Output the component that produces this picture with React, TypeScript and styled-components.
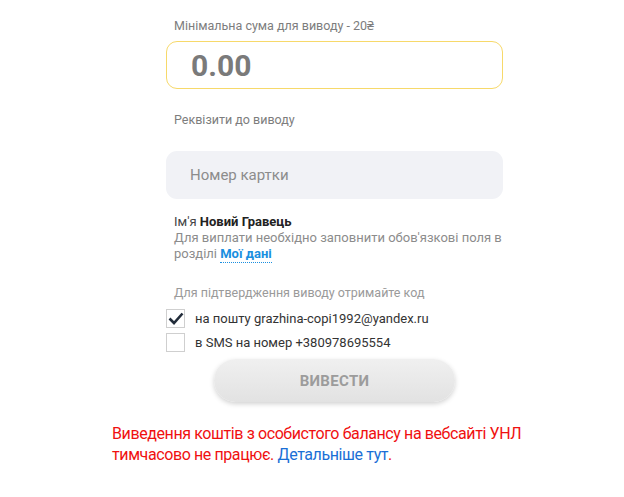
import React, { useState } from 'react';
import styled, { createGlobalStyle } from 'styled-components';

const GlobalStyle = createGlobalStyle`
  body {
    margin: 0;
    background: #fff;
    font-family: Roboto, "Noto Sans", Arial, sans-serif;
  }
`

const Page = styled.div`
  width: 624px;
  display: flex;
  flex-direction: column;
  align-items: center;
  padding-top: 17px;
`

const Form = styled.div`
  width: 337px;
  margin-left: 45px;
  display: flex;
  flex-direction: column;
`

const Label = styled.div<{ $light?: boolean }>`
  font-size: 12.5px;
  color: ${(p) => (p.$light ? '#9a9a9a' : '#7d7d7d')};
  padding-left: 8px;
  line-height: 18px;
`

const AmountInput = styled.input`
  box-sizing: border-box;
  margin-top: 6px;
  height: 48px;
  border: 1.5px solid #f7d96a;
  border-radius: 11px;
  padding: 0 24px;
  font-family: inherit;
  font-size: 30px;
  font-weight: 700;
  color: #7a7a7a;
  outline: none;

  &::placeholder {
    color: #7a7a7a;
  }
`

const CardInput = styled.input`
  box-sizing: border-box;
  margin-top: 22px;
  height: 48px;
  border: none;
  background: #f1f2f6;
  border-radius: 11px;
  padding: 0 24px;
  font-family: inherit;
  font-size: 15px;
  color: #555;
  outline: none;

  &::placeholder {
    color: #8c8c8c;
  }
`

const Section = styled.div<{ $top: number }>`
  margin-top: ${(p) => p.$top}px;
`

const NameLine = styled.div`
  font-size: 13px;
  color: #444;
  padding-left: 8px;
  line-height: 17px;

  b {
    color: #222;
  }
`

const Note = styled.div`
  font-size: 13px;
  color: #8c8c8c;
  padding-left: 8px;
  line-height: 16px;
`

const DottedLink = styled.a`
  color: #1a8fe0;
  font-weight: 700;
  text-decoration: none;
  border-bottom: 1.5px dotted #1a8fe0;
  padding-bottom: 1px;
`

const CheckRow = styled.label`
  display: flex;
  align-items: center;
  gap: 10px;
  height: 24px;
  font-size: 13px;
  color: #333;
  cursor: pointer;
`

const Box = styled.span`
  box-sizing: border-box;
  width: 19px;
  height: 19px;
  border: 1px solid #cfcfcf;
  background: #fff;
  display: flex;
  align-items: center;
  justify-content: center;
`

const Checks = styled.div`
  margin-top: 4px;
  display: flex;
  flex-direction: column;
`

const SubmitButton = styled.button`
  margin-top: 5px;
  margin-left: 48px;
  width: 241px;
  height: 43px;
  border: none;
  border-radius: 22px;
  background: linear-gradient(#f0f0f0, #e2e2e2);
  box-shadow: 0 2px 5px rgba(0, 0, 0, 0.18);
  color: #9c9c9c;
  font-family: inherit;
  font-size: 15px;
  font-weight: 700;
  letter-spacing: 0.3px;
`

const Warning = styled.div`
  margin-top: 21px;
  margin-left: 16px;
  width: 416px;
  font-size: 16px;
  line-height: 21px;
  letter-spacing: -0.4px;
  color: #f01010;

  a {
    color: #1a6fd6;
    text-decoration: none;
  }
`

const Check = () => (
  <svg width="16" height="13" viewBox="0 0 16 13">
    <path d="M1.5 6.5 L6 11 L14.5 1.5" fill="none" stroke="#222c3a" strokeWidth="2.6" />
  </svg>
)

const App = () => {
  const [byMail, setByMail] = useState(true);
  const [bySms, setBySms] = useState(false);

  return (
    <Page>
      <GlobalStyle />
      <Form>
        <Label>Мінімальна сума для виводу - 20₴</Label>
        <AmountInput placeholder="0.00" />

        <Section $top={22}>
          <Label>Реквізити до виводу</Label>
        </Section>
        <CardInput placeholder="Номер картки" />

        <Section $top={14}>
          <NameLine>Ім'я <b>Новий Гравець</b></NameLine>
          <Note>Для виплати необхідно заповнити обов'язкові поля в</Note>
          <Note>розділі <DottedLink href="#">Мої дані</DottedLink></Note>
        </Section>

        <Section $top={22}>
          <Label $light>Для підтвердження виводу отримайте код</Label>
        </Section>
        <Checks>
          <CheckRow onClick={() => setByMail(!byMail)}>
            <Box>{byMail && <Check />}</Box>
            на пошту grazhina-copi1992@yandex.ru
          </CheckRow>
          <CheckRow onClick={() => setBySms(!bySms)}>
            <Box>{bySms && <Check />}</Box>
            в SMS на номер +380978695554
          </CheckRow>
        </Checks>

        <SubmitButton>ВИВЕСТИ</SubmitButton>
      </Form>

      <Warning>
        Виведення коштів з особистого балансу на вебсайті УНЛ тимчасово не працює. <a href="#">Детальніше тут</a>.
      </Warning>
    </Page>
  );
};

export default App;
